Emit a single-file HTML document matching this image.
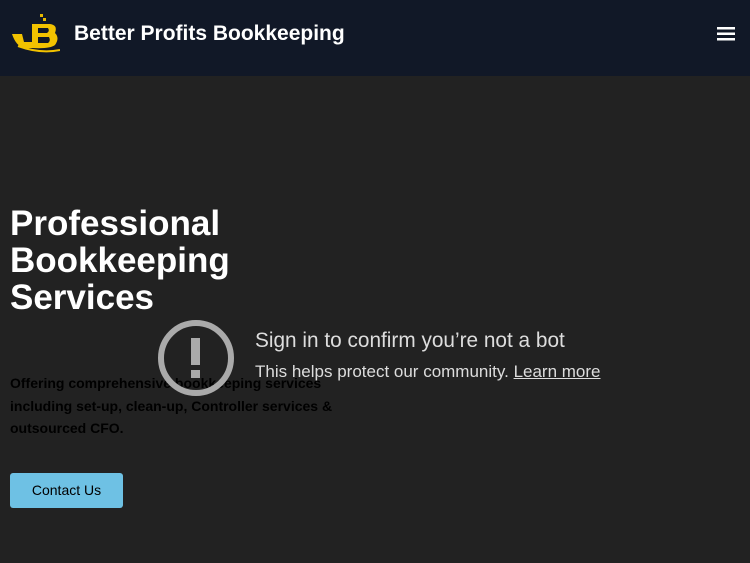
<!DOCTYPE html>
<html><head><style>
body{margin:0;width:750px;height:563px;background:#222;font-family:"Liberation Sans",Roboto,sans-serif;overflow:hidden;position:relative}
.hd{position:absolute;left:0;top:0;width:750px;height:76px;background:#111827}
.t{position:absolute;left:74px;top:22px;color:#fff;font-weight:bold;font-size:21px}
.h1{position:absolute;left:10px;top:205px;color:#fff;font-weight:bold;font-size:35px;line-height:37px;margin:0}
.p{position:absolute;left:10px;top:372px;color:#000;font-weight:bold;font-size:14px;line-height:22.5px;width:340px}
.btn{position:absolute;left:10px;top:473px;width:113px;height:35px;background:#6ec1e4;border-radius:3px;font-size:14px;color:#000;text-align:center;line-height:35px}
.ic{position:absolute;left:158px;top:320px;border:6px solid #aaa;border-radius:50%;box-sizing:border-box;width:76px;height:76px}
.s1{position:absolute;left:255px;top:329px;color:#ddd;font-size:20.8px}
.s2{position:absolute;left:255px;top:362px;color:#ddd;font-size:17px}
</style></head><body>
<div class="hd">
<svg style="position:absolute;left:10px;top:12px" width="50" height="42" viewBox="0 0 50 42">
<rect x="30" y="2" width="3" height="3" fill="#e6b800"/><rect x="33" y="6" width="3" height="3" fill="#e6b800"/>
<path d="M2 22 L12 22 L14 30 L22 30 L22 12 L40 12 Q48 13 45 21 Q50 26 45 33 Q40 37 22 36 L14 36 Q6 34 2 22Z" fill="#f2c200"/>
<path d="M28 16 L38 16 Q40 19 37 21 L28 21Z M28 25 L39 25 Q41 29 38 31 L28 31Z" fill="#111827"/>
<path d="M8 34 Q30 42 50 38" stroke="#f2c200" stroke-width="2" fill="none"/>
</svg>
<div class="t">Better Profits Bookkeeping</div>
<svg style="position:absolute;left:717px;top:27px" width="18" height="14"><rect y="0" width="18" height="2.5" fill="#fff"/><rect y="5.5" width="18" height="2.5" fill="#fff"/><rect y="11" width="18" height="2.5" fill="#fff"/></svg>
</div>
<h1 class="h1">Professional<br>Bookkeeping<br>Services</h1>
<div class="p">Offering comprehensive bookkeeping services including set-up, clean-up, Controller services &amp; outsourced CFO.</div>
<div class="btn">Contact Us</div>
<div class="ic"></div>
<div style="position:absolute;left:191px;top:338px;width:9px;height:27px;background:#aaa"></div>
<div style="position:absolute;left:191px;top:370px;width:9px;height:8px;background:#aaa"></div>
<div class="s1">Sign in to confirm you’re not a bot</div>
<div class="s2">This helps protect our community. <u>Learn more</u></div>
</body></html>
